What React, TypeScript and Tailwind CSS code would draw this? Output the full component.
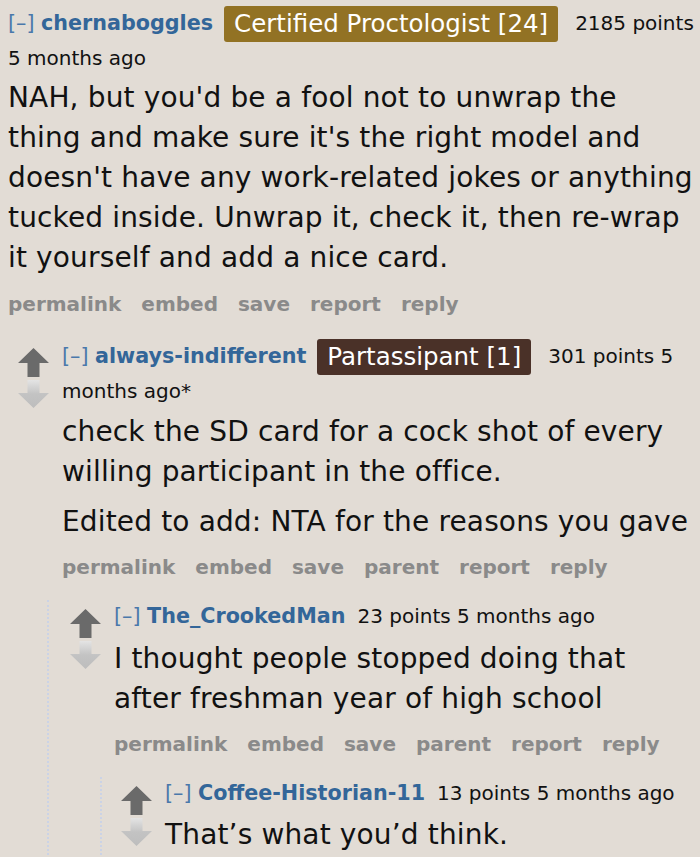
const font = { fontFamily: '"DejaVu Sans", Verdana, sans-serif' }

function Arrows() {
  return (
    <div className="flex flex-col items-center shrink-0 w-[34px] pt-[9px] gap-[3px]">
      <svg width="31" height="29" viewBox="0 0 31 29">
        <path d="M15.5 0 L31 15 L21.5 15 L21.5 29 L9.5 29 L9.5 15 L0 15 Z" fill="#6a6a6a" />
      </svg>
      <svg width="31" height="28" viewBox="0 0 31 28">
        <defs>
          <linearGradient id="dn" x1="0" y1="0" x2="0" y2="1">
            <stop offset="0" stopColor="#e4e4e4" />
            <stop offset="0.5" stopColor="#c3c3c3" />
            <stop offset="1" stopColor="#bdbdbd" />
          </linearGradient>
        </defs>
        <path d="M9.5 0 L21.5 0 L21.5 13 L31 13 L15.5 28 L0 13 L9.5 13 Z" fill="url(#dn)" />
      </svg>
    </div>
  )
}

function Buttons({ items, className = 'mt-[11px]' }: { items: string[]; className?: string }) {
  return (
    <div className={`flex gap-[20px] text-[20px] leading-[30px] font-bold text-[#8a8a8a] ${className}`}>
      {items.map((b) => (
        <span key={b}>{b}</span>
      ))}
    </div>
  )
}

function Tagline({
  user,
  flair,
  flairBg,
  meta,
  className = '',
}: {
  user: string
  flair?: string
  flairBg?: string
  meta: React.ReactNode
  className?: string
}) {
  return (
    <div className={`text-[20px] leading-[33px] text-[#111] ${className}`}>
      <span className="text-[#4a78ab] text-[20.7px]">[–] </span>
      <span className="text-[#336699] font-bold text-[20.7px]">{user}</span>
      {flair && (
        <span
          className={`inline-block align-middle text-white text-[24.5px] leading-[36px] px-[10px] rounded-[3px] ml-[11px] ${flairBg}`}
        >
          {flair}
        </span>
      )}
      <span className={flair ? 'ml-[17px]' : 'ml-[12px]'}>{meta}</span>
    </div>
  )
}

function Body({ children, className = 'mt-[5px]' }: { children: React.ReactNode; className?: string }) {
  return (
    <div className={`text-[28px] leading-[40px] tracking-[0.15px] text-[#111] ${className}`}>
      {children}
    </div>
  )
}

export default function App() {
  return (
    <div className="w-[700px] h-[857px] overflow-hidden bg-[#e2dcd5]" style={font}>
      <div className="pl-[8px] pt-[6px]">
        <Tagline
          user="chernaboggles"
          flair="Certified Proctologist [24]"
          flairBg="bg-[#927224]"
          meta={
            <>
              <span className="whitespace-nowrap">2185 points</span>
              <br />5 months ago
            </>
          }
        />
        <Body className="mt-[3px] whitespace-nowrap">
          NAH, but you'd be a fool not to unwrap the
          <br />
          thing and make sure it's the right model and
          <br />
          doesn't have any work-related jokes or anything
          <br />
          tucked inside. Unwrap it, check it, then re-wrap
          <br />
          it yourself and add a nice card.
        </Body>
        <Buttons items={['permalink', 'embed', 'save', 'report', 'reply']} />

        <div className="flex mt-[20px] ml-[8px] gap-[12px] pr-[4px]">
          <Arrows />
          <div className="flex-1 min-w-0">
            <Tagline
              user="always-indifferent"
              flair="Partassipant [1]"
              flairBg="bg-[#4a3128]"
              meta="301 points 5 months ago*"
            />
            <Body className="mt-[4px]">
              <p>check the SD card for a cock shot of every willing participant in the office.</p>
              <p className="mt-[10px]">Edited to add: NTA for the reasons you gave</p>
            </Body>
            <Buttons items={['permalink', 'embed', 'save', 'parent', 'report', 'reply']} className="mt-[10px]" />
          </div>
        </div>

        <div className="ml-[39px] mt-[18px] border-l-2 border-dotted border-[#cbd3e6] pl-[19px] pr-[4px]">
          <div className="flex gap-[12px]">
            <Arrows />
            <div className="flex-1 min-w-0">
              <Tagline user="The_CrookedMan" meta="23 points 5 months ago" />
              <Body className="mt-[6px]">
                I thought people stopped doing that after freshman year of high school
              </Body>
              <Buttons
                items={['permalink', 'embed', 'save', 'parent', 'report', 'reply']}
                className="mt-[10px]"
              />
            </div>
          </div>

          <div className="ml-[32px] mt-[18px] border-l-2 border-dotted border-[#cbd3e6] pl-[17px]">
            <div className="flex gap-[12px]">
              <Arrows />
              <div className="flex-1 min-w-0">
                <Tagline user="Coffee-Historian-11" meta="13 points 5 months ago" />
                <Body>That’s what you’d think.</Body>
              </div>
            </div>
          </div>
        </div>
      </div>
    </div>
  )
}
